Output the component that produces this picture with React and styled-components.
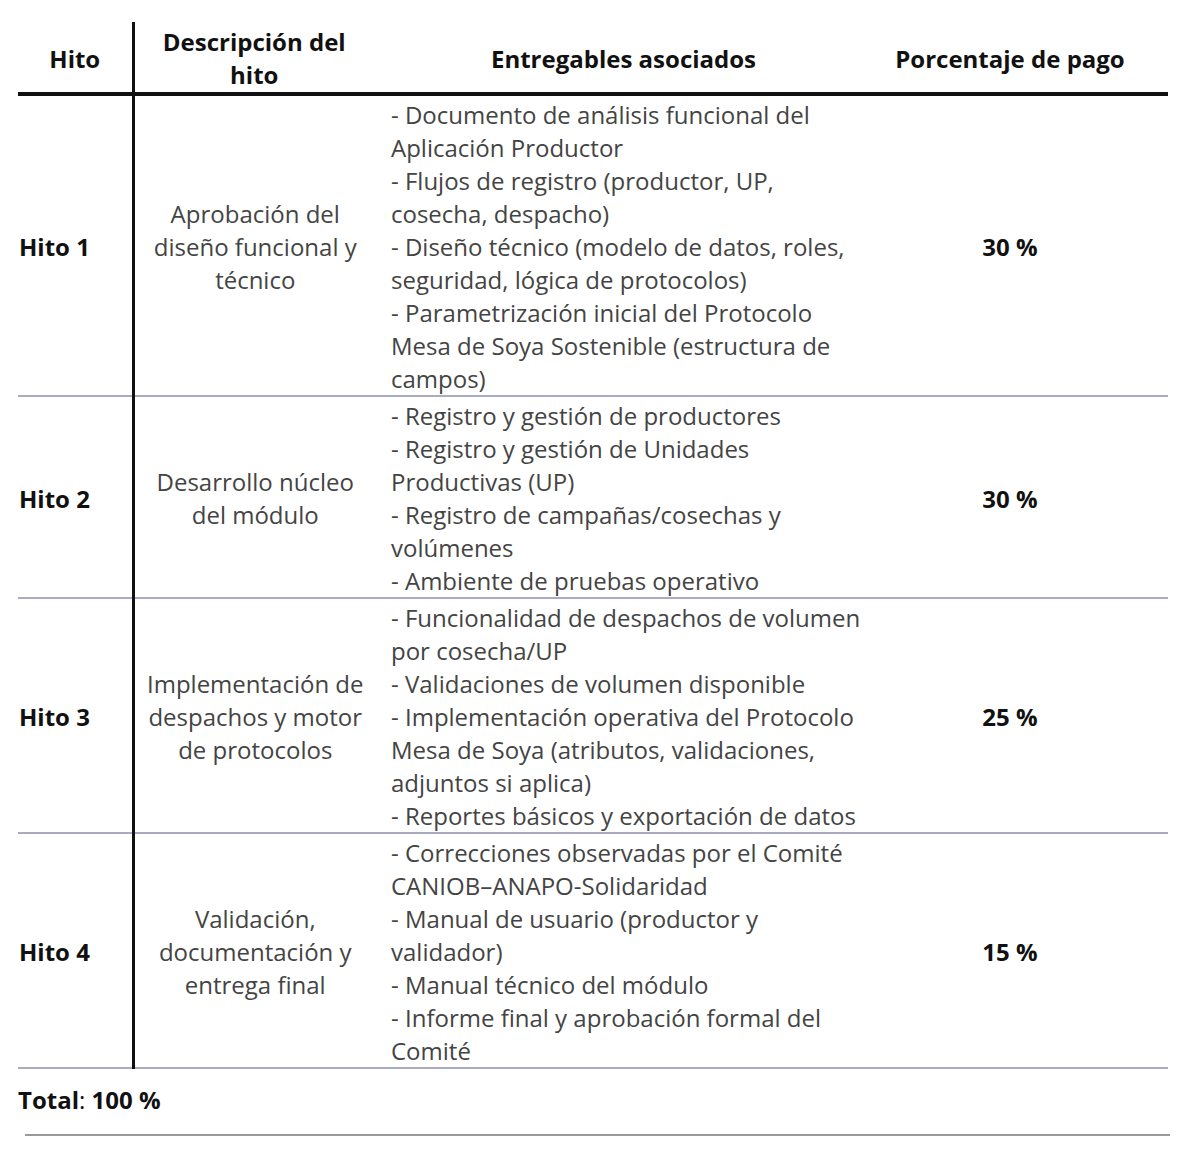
import React from "react";
import styled, { createGlobalStyle } from "styled-components";

const Global = createGlobalStyle`
  html, body { margin: 0; padding: 0; background: #ffffff; }
  body { font-family: "Open Sans", "Noto Sans", sans-serif; }
`;

const Page = styled.div`
  padding: 22px 0 0 18px;
  width: 1152px;
`;

const Table = styled.table`
  width: 1150px;
  border-collapse: collapse;
  table-layout: fixed;
  font-size: 24px;
  line-height: 33px;
`;

const HeadCell = styled.th`
  font-weight: 700;
  color: #111;
  text-align: center;
  vertical-align: middle;
  padding: ${(p) => p.$pad || "3px 0 1px"};
  border-bottom: 4px solid #111;
  border-right: ${(p) => (p.$divider ? "3px solid #111" : "none")};
`;

const Row = styled.tr`
  & > td {
    border-bottom: 2px solid #ababc0;
  }
`;

const MilestoneCell = styled.td`
  font-weight: 700;
  color: #111;
  text-align: left;
  vertical-align: middle;
  padding: 2px 0 0 1px;
  border-right: 3px solid #111 !important;
`;

const DescCell = styled.td`
  color: #444;
  text-align: center;
  vertical-align: middle;
  padding: 2px 12px 0 8px;
`;

const DeliverCell = styled.td`
  color: #444;
  text-align: left;
  vertical-align: middle;
  padding: 2px 4px 0 11px;
`;

const PercentCell = styled.td`
  font-weight: 700;
  color: #111;
  text-align: center;
  vertical-align: middle;
  padding: 2px 26px 0 0;
`;

const Item = styled.div``;

const Total = styled.p`
  margin: 14px 0 0 0;
  font-size: 24px;
  line-height: 33px;
  color: #111;
  strong { font-weight: 700; }
`;

const Rule = styled.hr`
  margin: 18px 0 0 7px;
  width: 1145px;
  border: none;
  height: 2px;
  background: #9a9a9a;
`;

const rows = [
  {
    hito: "Hito 1",
    desc: "Aprobación del diseño funcional y técnico",
    items: [
      "- Documento de análisis funcional del Aplicación Productor",
      "- Flujos de registro (productor, UP, cosecha, despacho)",
      "- Diseño técnico (modelo de datos, roles, seguridad, lógica de protocolos)",
      "- Parametrización inicial del Protocolo Mesa de Soya Sostenible (estructura de campos)",
    ],
    pct: "30 %",
  },
  {
    hito: "Hito 2",
    desc: "Desarrollo núcleo del módulo",
    items: [
      "- Registro y gestión de productores",
      "- Registro y gestión de Unidades Productivas (UP)",
      "- Registro de campañas/cosechas y volúmenes",
      "- Ambiente de pruebas operativo",
    ],
    pct: "30 %",
  },
  {
    hito: "Hito 3",
    desc: "Implementación de despachos y motor de protocolos",
    items: [
      "- Funcionalidad de despachos de volumen por cosecha/UP",
      "- Validaciones de volumen disponible",
      "- Implementación operativa del Protocolo Mesa de Soya (atributos, validaciones, adjuntos si aplica)",
      "- Reportes básicos y exportación de datos",
    ],
    pct: "25 %",
  },
  {
    hito: "Hito 4",
    desc: "Validación, documentación y entrega final",
    items: [
      "- Correcciones observadas por el Comité CANIOB–ANAPO-Solidaridad",
      "- Manual de usuario (productor y validador)",
      "- Manual técnico del módulo",
      "- Informe final y aprobación formal del Comité",
    ],
    pct: "15 %",
  },
];

export default function App() {
  return (
    <Page>
      <Global />
      <Table>
        <colgroup>
          <col style={{ width: 115 }} />
          <col style={{ width: 247 }} />
          <col style={{ width: 498 }} />
          <col style={{ width: 290 }} />
        </colgroup>
        <thead>
          <tr>
            <HeadCell $divider>Hito</HeadCell>
            <HeadCell $pad="3px 14px 1px 8px">Descripción del hito</HeadCell>
            <HeadCell $pad="3px 22px 1px 11px">Entregables asociados</HeadCell>
            <HeadCell $pad="3px 26px 1px 0">Porcentaje de pago</HeadCell>
          </tr>
        </thead>
        <tbody>
          {rows.map((r) => (
            <Row key={r.hito}>
              <MilestoneCell>{r.hito}</MilestoneCell>
              <DescCell>{r.desc}</DescCell>
              <DeliverCell>
                {r.items.map((it) => (
                  <Item key={it}>{it}</Item>
                ))}
              </DeliverCell>
              <PercentCell>{r.pct}</PercentCell>
            </Row>
          ))}
        </tbody>
      </Table>
      <Total>
        <strong>Total</strong>: <strong>100 %</strong>
      </Total>
      <Rule />
    </Page>
  );
}
